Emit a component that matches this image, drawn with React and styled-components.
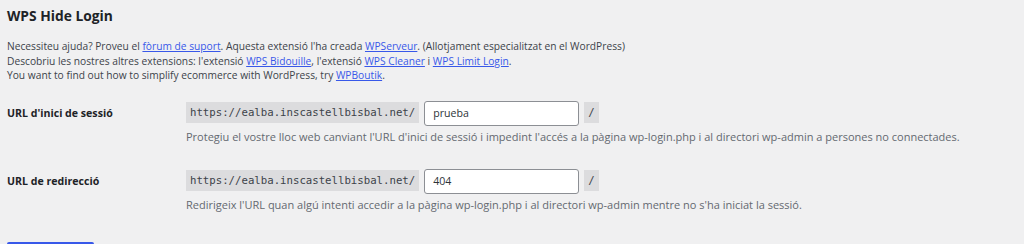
import styled, { createGlobalStyle } from "styled-components";

const Global = createGlobalStyle`
  html, body {
    margin: 0;
    padding: 0;
    background: #f0f0f1;
  }
  body {
    font-family: "Open Sans", "Noto Sans", sans-serif;
    color: #3c434a;
    overflow: hidden;
  }
`;

const Wrap = styled.div`
  padding: 6px 7px 0 7px;
  height: 244px;
  box-sizing: border-box;
`;

const Title = styled.h2`
  margin: 0;
  font-size: 13.8px;
  font-weight: 700;
  color: #1d2327;
  line-height: 20px;
`;

const Intro = styled.p`
  margin: 13px 0 0 0;
  font-size: 10.22px;
  line-height: 14.5px;
  color: #3c434a;
`;

const Link = styled.a`
  color: #3858e9;
  text-decoration: underline;
`;

const Table = styled.div`
  display: grid;
  grid-template-columns: 179px 1fr;
  row-gap: 25px;
  margin-top: 18px;
`;

const Label = styled.div`
  font-size: 10.6px;
  font-weight: 700;
  color: #1d2327;
  line-height: 24px;
`;

const Field = styled.div`
  display: flex;
  flex-direction: column;
`;

const Line = styled.div`
  display: flex;
  align-items: center;
  gap: 5px;
`;

const Code = styled.code`
  font-family: "DejaVu Sans Mono", "Liberation Mono", monospace;
  font-size: 10.7px;
  line-height: 21px;
  padding: 0 4px;
  background: #dcdcde;
  color: #3c434a;
  margin-top: -1px;
`;

const Input = styled.input`
  box-sizing: border-box;
  width: 155px;
  height: 25px;
  border: 1px solid #8c8f94;
  border-radius: 3px;
  background: #fff;
  padding: 0 8px;
  font-family: "Open Sans", "Noto Sans", sans-serif;
  font-size: 10.6px;
  color: #2c3338;
  outline: none;
`;

const Desc = styled.p`
  margin: 3px 0 0 0;
  font-size: 11px;
  line-height: 15px;
  color: #646970;
`;

const Button = styled.button`
  margin-top: 30px;
  width: 87px;
  height: 26px;
  border: none;
  border-radius: 2px;
  background: #3858e9;
`;

export default function App() {
  return (
    <>
      <Global />
      <Wrap>
        <Title>WPS Hide Login</Title>
        <Intro>
          Necessiteu ajuda? Proveu el <Link>fòrum de suport</Link>. Aquesta extensió l'ha creada{" "}
          <Link>WPServeur</Link>. (Allotjament especialitzat en el WordPress)
          <br />
          Descobriu les nostres altres extensions: l'extensió <Link>WPS Bidouille</Link>, l'extensió{" "}
          <Link>WPS Cleaner</Link> i <Link>WPS Limit Login</Link>.
          <br />
          You want to find out how to simplify ecommerce with WordPress, try <Link>WPBoutik</Link>.
        </Intro>
        <Table>
          <Label>URL d'inici de sessió</Label>
          <Field>
            <Line>
              <Code>https://ealba.inscastellbisbal.net/</Code>
              <Input defaultValue="prueba" />
              <Code>/</Code>
            </Line>
            <Desc>
              Protegiu el vostre lloc web canviant l'URL d'inici de sessió i impedint l'accés a la pàgina
              wp-login.php i al directori wp-admin a persones no connectades.
            </Desc>
          </Field>
          <Label>URL de redirecció</Label>
          <Field>
            <Line>
              <Code>https://ealba.inscastellbisbal.net/</Code>
              <Input defaultValue="404" />
              <Code>/</Code>
            </Line>
            <Desc>
              Redirigeix l'URL quan algú intenti accedir a la pàgina wp-login.php i al directori wp-admin
              mentre no s'ha iniciat la sessió.
            </Desc>
          </Field>
        </Table>
        <Button />
      </Wrap>
    </>
  );
}
